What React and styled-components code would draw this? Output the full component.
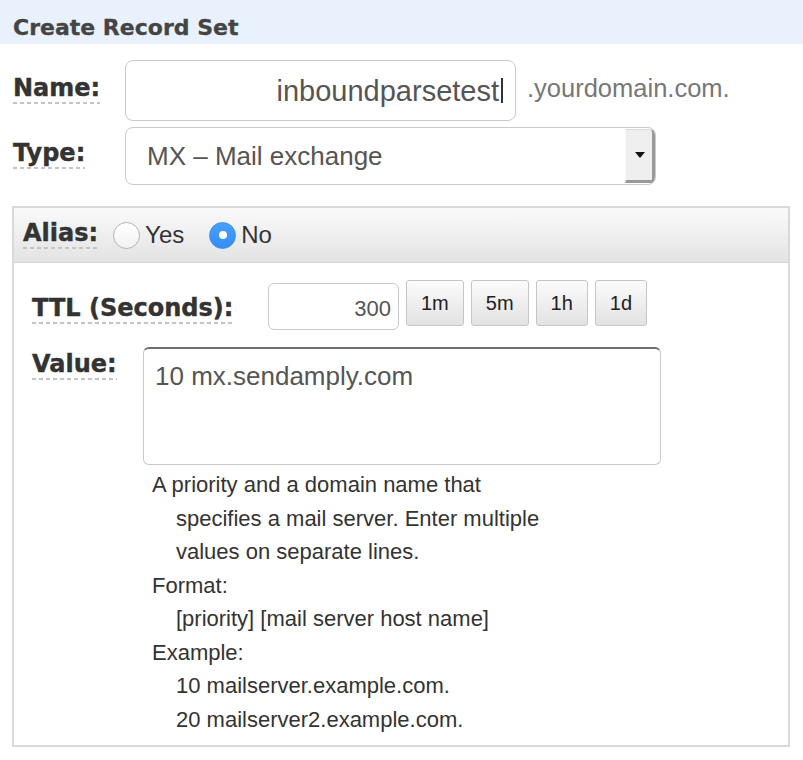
import React from "react";
import styled, { createGlobalStyle } from "styled-components";

const GlobalStyle = createGlobalStyle`
  html, body { margin: 0; padding: 0; background: #fff; }
  body { font-family: "Liberation Sans", Arial, sans-serif; }
  * { box-sizing: border-box; }
`;

const Page = styled.div`
  width: 803px;
  height: 760px;
  background: #fff;
`;

const Header = styled.div`
  height: 44px;
  padding: 17px 0 0 13px;
  background: #e9f1fc;
`;

const Title = styled.h1`
  margin: 0;
  font-family: "DejaVu Sans", Verdana, sans-serif;
  font-weight: bold;
  font-size: 22px;
  line-height: 22px;
  color: #444;
  -webkit-text-stroke: 0.3px #444;
`;

const Form = styled.div`
  padding: 0 0 0 12px;
`;

const FieldRow = styled.div`
  display: flex;
  align-items: flex-start;
  margin-top: ${(p) => p.$top}px;
`;

const LabelCell = styled.div`
  flex: none;
  width: ${(p) => p.$width}px;
  padding-left: ${(p) => p.$pad || 0}px;
  padding-top: ${(p) => p.$offset || 0}px;
`;

const Label = styled.span`
  display: inline-block;
  font-family: "DejaVu Sans", Verdana, sans-serif;
  font-weight: bold;
  font-size: 24px;
  line-height: 24px;
  padding-bottom: 4px;
  color: #333;
  -webkit-text-stroke: 0.4px #333;
  background-image: linear-gradient(to right, #c4c4c4 4px, transparent 4px);
  background-size: 7px 2px;
  background-repeat: repeat-x;
  background-position: left bottom;
`;

const NameField = styled.div`
  width: 391px;
  height: 61px;
  border: 1px solid #c9c9c9;
  border-radius: 8px;
  display: flex;
  align-items: center;
  justify-content: flex-end;
  padding-right: 12px;
  font-size: 29px;
  line-height: 34px;
  color: #555;
`;

const Caret = styled.span`
  display: inline-block;
  width: 2px;
  height: 25px;
  margin-left: 2px;
  background: #333;
`;

const Suffix = styled.span`
  margin: 13px 0 0 11px;
  font-size: 25.5px;
  line-height: 30px;
  color: #777;
`;

const Select = styled.div`
  width: 531px;
  height: 58px;
  border: 1px solid #cbcbcb;
  border-radius: 8px;
  display: flex;
  align-items: stretch;
  overflow: hidden;
`;

const SelectText = styled.div`
  flex: 1;
  display: flex;
  align-items: center;
  padding-left: 21px;
  font-size: 26px;
  color: #555;
`;

const DropButton = styled.div`
  width: 30px;
  margin: 1px 0 1px 0;
  background: #efefef;
  border-left: 1px solid #fafafa;
  border-top: 1px solid #dadada;
  border-right: 3px solid #999;
  border-bottom: 3px solid #999;
  border-radius: 0 4px 4px 0;
  display: flex;
  align-items: center;
  justify-content: center;
`;

const Arrow = styled.span`
  width: 0;
  height: 0;
  border-left: 5px solid transparent;
  border-right: 5px solid transparent;
  border-top: 6px solid #111;
  margin-left: 1px;
`;

const Panel = styled.div`
  width: 778px;
  height: 541px;
  margin-top: 21px;
  border: 2px solid #d9d9d9;
`;

const PanelHeader = styled.div`
  height: 55px;
  padding-left: 9px;
  display: flex;
  align-items: center;
  background: linear-gradient(to bottom, #fafafa, #e3e3e3);
  border-bottom: 1px solid #d4d4d4;
`;

const RadioGroup = styled.div`
  display: flex;
  align-items: center;
  margin-left: 15px;
  gap: 25px;
`;

const RadioOption = styled.label`
  display: inline-flex;
  align-items: center;
  gap: 5px;
  font-size: 24px;
  color: #333;
`;

const RadioCircle = styled.span`
  width: 27px;
  height: 27px;
  border-radius: 50%;
  display: inline-flex;
  align-items: center;
  justify-content: center;
  border: 1px solid ${(p) => (p.$checked ? "#3a8ff0" : "#b3b3b3")};
  background: ${(p) =>
    p.$checked
      ? "linear-gradient(to bottom, #4aa0fb, #338cf2)"
      : "linear-gradient(to bottom, #ffffff, #f2f2f2)"};
  &::after {
    content: "";
    display: ${(p) => (p.$checked ? "block" : "none")};
    width: 8px;
    height: 8px;
    border-radius: 50%;
    background: #fff;
  }
`;

const PanelBody = styled.div`
  padding: 17px 0 0 18px;
`;

const TtlRow = styled.div`
  display: flex;
  align-items: flex-start;
`;

const TtlInput = styled.div`
  width: 131px;
  height: 47px;
  margin-top: 3px;
  border: 1px solid #c9c9c9;
  border-radius: 6px;
  display: flex;
  align-items: center;
  justify-content: flex-end;
  padding: 4px 7px 0 0;
  font-size: 22px;
  color: #555;
`;

const Presets = styled.div`
  display: flex;
  gap: 7px;
  margin-left: 7px;
`;

const PresetButton = styled.button`
  height: 46px;
  padding: 0 14px;
  border: 1px solid #c6c6c6;
  border-radius: 3px;
  background: linear-gradient(to bottom, #fbfbfb, #e2e2e2);
  font-family: "Liberation Sans", Arial, sans-serif;
  font-size: 20px;
  color: #222;
`;

const ValueRow = styled.div`
  display: flex;
  align-items: flex-start;
  margin-top: 17px;
`;

const ValueColumn = styled.div`
  display: flex;
  flex-direction: column;
`;

const ValueBox = styled.textarea`
  display: block;
  width: 518px;
  height: 118px;
  margin: 0;
  resize: none;
  border: 1px solid #c9c9c9;
  border-top: 2px solid #6f6f6f;
  border-radius: 6px;
  padding: 12px 11px;
  font-family: "Liberation Sans", Arial, sans-serif;
  font-size: 26px;
  line-height: 31px;
  color: #555;
  background: #fff;
  outline: none;
`;

const Help = styled.div`
  margin-top: 3px;
  padding-left: 9px;
  font-size: 22px;
  line-height: 33.5px;
  color: #333;
`;

const HelpLine = styled.div`
  padding-left: ${(p) => (p.$indent ? 24 : 0)}px;
  white-space: nowrap;
`;

export default function App() {
  return (
    <Page>
      <GlobalStyle />
      <Header>
        <Title>Create Record Set</Title>
      </Header>
      <Form>
        <FieldRow $top={16}>
          <LabelCell $width={113} $pad={1} $offset={16}>
            <Label>Name:</Label>
          </LabelCell>
          <NameField>
            inboundparsetest
            <Caret />
          </NameField>
          <Suffix>.yourdomain.com.</Suffix>
        </FieldRow>
        <FieldRow $top={6}>
          <LabelCell $width={113} $pad={1} $offset={14}>
            <Label>Type:</Label>
          </LabelCell>
          <Select>
            <SelectText>MX – Mail exchange</SelectText>
            <DropButton>
              <Arrow />
            </DropButton>
          </Select>
        </FieldRow>
        <Panel>
          <PanelHeader>
            <Label>Alias:</Label>
            <RadioGroup>
              <RadioOption>
                <RadioCircle />
                Yes
              </RadioOption>
              <RadioOption>
                <RadioCircle $checked />
                No
              </RadioOption>
            </RadioGroup>
          </PanelHeader>
          <PanelBody>
            <TtlRow>
              <LabelCell $width={236} $offset={16}>
                <Label>TTL (Seconds):</Label>
              </LabelCell>
              <TtlInput>300</TtlInput>
              <Presets>
                <PresetButton>1m</PresetButton>
                <PresetButton>5m</PresetButton>
                <PresetButton>1h</PresetButton>
                <PresetButton>1d</PresetButton>
              </Presets>
            </TtlRow>
            <ValueRow>
              <LabelCell $width={111} $offset={5}>
                <Label>Value:</Label>
              </LabelCell>
              <ValueColumn>
                <ValueBox readOnly defaultValue="10 mx.sendamply.com" />
                <Help>
                  <HelpLine>A priority and a domain name that</HelpLine>
                  <HelpLine $indent>specifies a mail server. Enter multiple</HelpLine>
                  <HelpLine $indent>values on separate lines.</HelpLine>
                  <HelpLine>Format:</HelpLine>
                  <HelpLine $indent>[priority] [mail server host name]</HelpLine>
                  <HelpLine>Example:</HelpLine>
                  <HelpLine $indent>10 mailserver.example.com.</HelpLine>
                  <HelpLine $indent>20 mailserver2.example.com.</HelpLine>
                </Help>
              </ValueColumn>
            </ValueRow>
          </PanelBody>
        </Panel>
      </Form>
    </Page>
  );
}
